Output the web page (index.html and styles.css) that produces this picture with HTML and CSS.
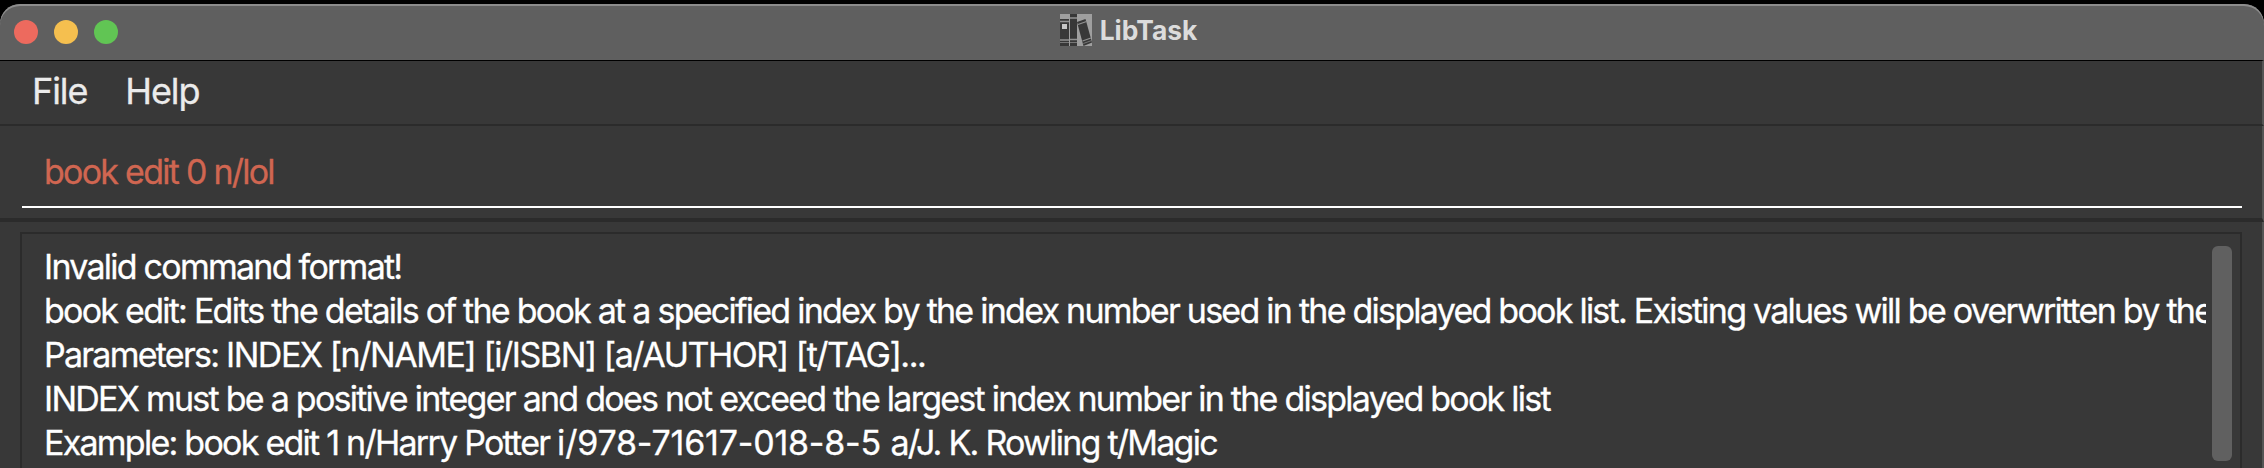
FILE: index.html
```html
<!DOCTYPE html>
<html lang="en"><head><meta charset="utf-8"><title>LibTask</title><link rel="stylesheet" href="styles.css"></head>
<body>
<div class="window">
<header class="titlebar"><div class="lights"><i class="light close"></i><i class="light minimize"></i><i class="light expand"></i></div>
<div class="title"><svg class="books" viewBox="0 0 32 32"><rect width="32" height="32" fill="#9f9f9f"/>
<g fill="#383838"><path d="M0 5h9v27H0zM10 0h7v32h-7z"/><path d="M17 8l8.500-3L32 28.500l-8.500 3.500z"/></g>
<path d="M0 7.500h9M0 26h9M10 4h7M10 25.500h7M18 10.500l8.500-3M22.500 27l8.500-3" stroke="#929292" stroke-width="1.300"/><path d="M0 28.500h9M10 28.500h7M23.300 29.500l8.500-3" stroke="#777" stroke-width="1"/><path d="M2 10h5v5H2z" fill="#c6c6c6"/></svg><span class="name">LibTask</span></div></header>
<nav class="menubar"><span class="menu file">File</span><span class="menu help">Help</span></nav>
<section class="command"><div class="field"><span class="line cmd">book edit 0 n/lol</span></div></section>
<main class="result"><div class="panel"><div class="output">
<p class="line">Invalid command format!</p>
<p class="line">book edit: Edits the details of the book at a specified index by the index number used in the displayed book list. Existing values will be overwritten by the</p>
<p class="line">Parameters: <span class="caps">INDEX [n/NAME] [i/ISBN] [a/AUTHOR] [t/TAG]...</span></p>
<p class="line">INDEX must be a positive integer and does not exceed the largest index number in the displayed book list</p>
<p class="line">Example: book edit 1 n/Harry Potter <span class="digits">i/978-71617-018-8-5 </span>a/J. K. Rowling t/Magic</p>
</div><div class="thumb"></div></div></main>
</div></body></html>
```
FILE: styles.css
```css
*{box-sizing:border-box}
body{margin:0;background:#000;font-family:Inter,sans-serif;color:#fff}
.window{height:468px;padding-top:4px;overflow:hidden;display:flex;flex-direction:column}
.titlebar{height:56px;flex:none;background:#5f5f5f;border-radius:20px 20px 0 0;box-shadow:inset 0 2px #8c8c8c;display:grid;grid-template-columns:1fr auto 1fr;align-items:center}
.lights{display:flex;gap:16px;padding-left:14px}
.light{width:24px;height:24px;border-radius:50%}
.close{background:#ed6a5e}.minimize{background:#f5bf4f}.expand{background:#61c554}
.title{display:flex;align-items:center;gap:8px;font-size:26.4px;line-height:32px;font-weight:700;color:#dcdcdc;padding:0 7px 4px 0}
.name{padding-top:1px;line-height:31px}
.books{width:32px;height:32px}
.menubar{height:66px;flex:none;background:#383838;border-top:1px solid #000;border-bottom:2px solid #2b2b2b;border-right:2px solid #555;display:flex;align-items:center;gap:38px;padding:0 0 3px 32px;font-size:36px;letter-spacing:-1.1px;color:#ebebeb;-webkit-text-stroke:.3px}
.command{height:96px;flex:none;background:#383838;border-bottom:4px solid #2b2b2b;border-right:2px solid #555;padding:16px 20px 0 22px}
.field{height:66px;border-bottom:2px solid #fff;padding:8px 22px;color:#d06651}
.line{font-size:34px;line-height:44px;letter-spacing:-1.75px;white-space:nowrap;-webkit-text-stroke:.3px}
.caps{letter-spacing:-1.47px}
.digits{letter-spacing:-.2px}
.result{flex:1;min-height:0;background:#383838;border-right:2px solid #555;padding:10px 20px 0}
.panel{height:260px;border:2px solid #2b2b2b;display:flex;gap:6px;padding:11px 8px 0 22px}
.output{flex:1;min-width:0;overflow:hidden}
.output p{margin:0;height:44px}
.thumb{width:20px;height:215px;margin-top:1px;background:#606060;border-radius:6px}
```
